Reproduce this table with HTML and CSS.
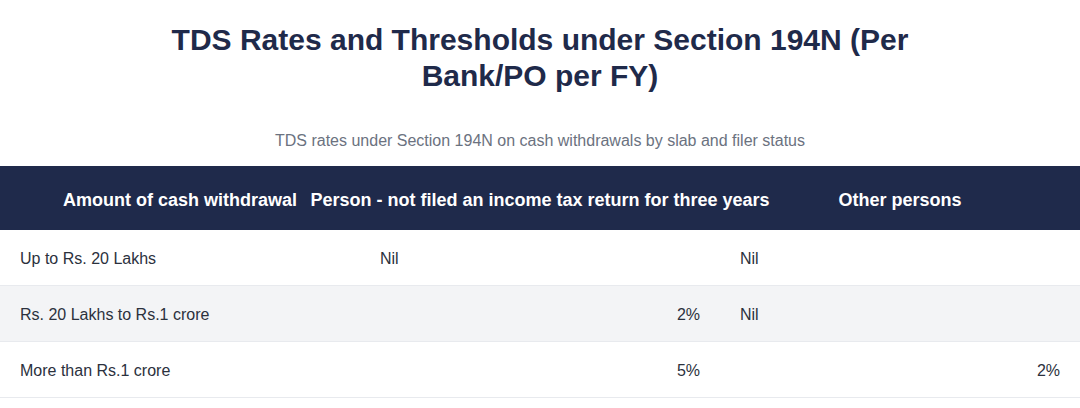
FILE: index.html
```html
<!DOCTYPE html>
<html lang="en">
<head>
<meta charset="utf-8">
<title>TDS Rates</title>
<link rel="stylesheet" href="styles.css">
</head>
<body>
<main class="page">
  <h1 class="title">TDS Rates and Thresholds under Section 194N (Per Bank/PO per FY)</h1>
  <p class="subtitle">TDS rates under Section 194N on cash withdrawals by slab and filer status</p>
  <div class="table">
    <div class="row head">
      <div class="th">Amount of cash withdrawal</div>
      <div class="th">Person - not filed an income tax return for three years</div>
      <div class="th">Other persons</div>
    </div>
    <div class="row">
      <div class="td">Up to Rs. 20 Lakhs</div>
      <div class="td">Nil</div>
      <div class="td">Nil</div>
    </div>
    <div class="row alt">
      <div class="td">Rs. 20 Lakhs to Rs.1 crore</div>
      <div class="td num">2%</div>
      <div class="td">Nil</div>
    </div>
    <div class="row">
      <div class="td">More than Rs.1 crore</div>
      <div class="td num">5%</div>
      <div class="td num">2%</div>
    </div>
  </div>
</main>
</body>
</html>
```
FILE: styles.css
```css
html, body {
  margin: 0;
  padding: 0;
  background: #ffffff;
}
body {
  font-family: "Liberation Sans", Arial, sans-serif;
  color: #2f3542;
}
.page {
  width: 1080px;
}
.title {
  margin: 0 auto;
  padding-top: 22px;
  width: 780px;
  text-align: center;
  font-size: 30px;
  line-height: 36px;
  font-weight: 700;
  color: #1f2a4a;
}
.subtitle {
  margin: 37px 0 0;
  text-align: center;
  font-size: 16px;
  line-height: 20px;
  color: #6b7280;
}
.table {
  margin-top: 15px;
}
.row {
  display: grid;
  grid-template-columns: repeat(3, minmax(0, 1fr));
  border-bottom: 1px solid #e8eaee;
}
.row.alt {
  background: #f3f4f6;
}
.row.head {
  background: #1f2a4b;
  border-bottom: none;
  height: 64px;
  box-sizing: border-box;
  padding-top: 3px;
  align-items: center;
}
.th {
  display: flex;
  justify-content: center;
  white-space: nowrap;
  color: #ffffff;
  font-weight: 700;
  font-size: 18px;
  line-height: 22px;
}
.td {
  padding: 19px 20px 16px;
  font-size: 16px;
  line-height: 20px;
  color: #2b313d;
}
.td.num {
  text-align: right;
}
```
